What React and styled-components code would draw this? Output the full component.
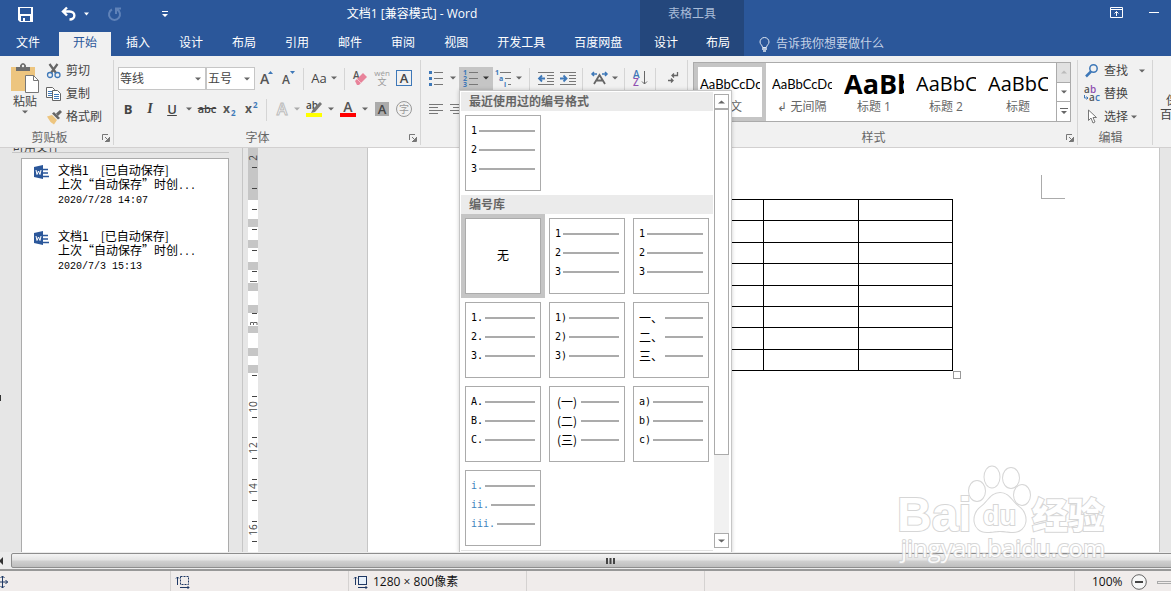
import React from "react";
import styled, { createGlobalStyle, css } from "styled-components";

const Global = createGlobalStyle`
  *, *::before, *::after { box-sizing: border-box; }
  body {
    margin: 0;
    font-family: "Open Sans", "Noto Sans CJK SC", sans-serif;
    font-size: 12px;
    line-height: 16px;
    color: #444;
  }
  button, select {
    font: inherit;
    color: inherit;
    background: none;
    border: 0;
    padding: 0;
    margin: 0;
    border-radius: 0;
  }
  svg { display: block; flex: none; overflow: visible; }
`;

const Shell = styled.div`
  position: relative;
  display: flex;
  flex-direction: column;
  height: 100vh;
  overflow: hidden;
  background: #e6e6e6;
`;

/* ---------- title bar and tabs ---------- */

const Header = styled.header`
  display: flex;
  flex: none;
  background: #2b579a;
  color: #fff;
`;
const HeaderMain = styled.div`
  flex: none;
  width: 640px;
`;
const HeaderContext = styled.div`
  flex: none;
  width: 104px;
  background: #24477c;
`;
const HeaderRest = styled.div`
  flex: 1;
  min-width: 0;
`;
const TitleRow = styled.div`
  display: flex;
  align-items: center;
  height: 28px;
  justify-content: ${(p) => p.$justify || "flex-start"};
  padding: ${(p) => p.$pad || "0"};
  color: ${(p) => p.$color || "#fff"};
`;
const QuickBar = styled.div`
  display: flex;
  align-items: center;
  flex: none;
`;
const QuickButton = styled.button`
  display: flex;
  flex: none;
  align-items: center;
  justify-content: center;
  gap: 8px;
  height: 28px;
  width: ${(p) => p.$w}px;
`;
const Title = styled.h1`
  flex: 1;
  margin: 0;
  padding-right: 16px;
  font-size: 12px;
  font-weight: 400;
  text-align: center;
`;
const TabRow = styled.nav`
  display: flex;
  align-items: stretch;
  height: 28px;
  gap: ${(p) => p.$gap || 0}px;
  padding-top: 4px;
`;
const Tab = styled.button`
  padding: 0 14px 2px;
  white-space: nowrap;
  ${(p) =>
    p.$file &&
    css`
      padding: 0 16px 2px;
      margin-right: 2px;
    `}
  ${(p) =>
    p.$active &&
    css`
      background: #f1f1f1;
      color: #2b579a;
    `}
`;
const TellMe = styled.button`
  display: flex;
  align-items: center;
  gap: 6px;
  margin-left: 15px;
  color: #c5d2e6;
`;

/* ---------- ribbon ---------- */

const Ribbon = styled.div`
  display: flex;
  flex: none;
  height: 92px;
  padding: 4px 0 2px;
  background: #f1f1f1;
  border-bottom: 1px solid #d2d0d0;
`;
const Group = styled.section`
  display: flex;
  flex: none;
  flex-direction: column;
  justify-content: space-between;
  width: ${(p) => p.$w}px;
  border-right: 1px solid #d5d5d5;
  padding-left: ${(p) => p.$pl || 0}px;
`;
const GroupFoot = styled.div`
  display: flex;
  align-items: center;
  height: 14px;
  padding-right: 3px;
  color: #666;
`;
const GroupName = styled.span`
  flex: 1;
  padding-right: 12px;
  text-align: center;
`;
const ToolRows = styled.div`
  display: flex;
  flex-direction: column;
  gap: 8px;
  padding-top: 7px;
`;
const ToolRow = styled.div`
  display: flex;
  align-items: center;
  height: 23px;
`;
const Tool = styled.button`
  display: flex;
  flex: none;
  align-items: center;
  justify-content: center;
  gap: ${(p) => p.$gap || 0}px;
  width: ${(p) => p.$w}px;
  height: 23px;
  padding-bottom: 1px;
  font-size: 13px;
  line-height: 16px;
  background: ${(p) => (p.$on ? "#c5c5c5" : "transparent")};
`;
const ItalicTool = styled(Tool)`
  font-family: "Liberation Serif", serif;
  font-size: 14px;
  font-style: italic;
  font-weight: 700;
`;
const UnderTool = styled(Tool)`
  font-weight: 600;
  text-decoration: underline;
`;
const StrikeTool = styled(Tool)`
  font-size: 11px;
  font-weight: 600;
  text-decoration: line-through;
`;
const Split = styled.span`
  flex: none;
  width: 1px;
  height: 22px;
  margin: 0 ${(p) => p.$m || 4}px;
  background: #d5d5d5;
`;
const Combo = styled.label`
  display: flex;
  align-items: center;
  flex: none;
  width: ${(p) => p.$w}px;
  height: 23px;
  padding-right: 4px;
  background: #fff;
  border: 1px solid #c6c6c6;
  select {
    appearance: none;
    flex: 1;
    min-width: 0;
    padding-left: 1px;
    height: 21px;
    outline: none;
  }
`;
const ClipRow = styled.div`
  display: flex;
  gap: 5px;
`;
const PasteButton = styled.button`
  display: flex;
  flex-direction: column;
  align-items: center;
  width: 32px;
  padding-top: 3px;
`;
const SmallList = styled.div`
  display: flex;
  flex-direction: column;
`;
const SmallButton = styled.button`
  display: flex;
  align-items: center;
  gap: 3px;
  height: 23px;
  padding-bottom: 2px;
  white-space: nowrap;
  > svg:first-child { width: 16px; margin-right: 1px; }
  > svg + span + svg { margin-left: ${(p) => p.$far || 0}px; }
`;
const Gallery = styled.div`
  display: flex;
  width: 378px;
  height: 60px;
  margin-top: 2px;
  background: #fff;
  border: 1px solid #ababab;
`;
const StyleItem = styled.button`
  display: flex;
  flex-direction: column;
  align-items: center;
  justify-content: flex-end;
  width: 72px;
  padding: 0 2px 2px;
  color: #666;
  border: 4px solid ${(p) => (p.$on ? "#c5c5c5" : "transparent")};
`;
const Sample = styled.span`
  display: flex;
  align-items: center;
  align-self: stretch;
  height: 30px;
  overflow: hidden;
  white-space: nowrap;
  color: #000;
  font-family: ${(p) => (p.$body ? "Lato" : '"Open Sans"')}, sans-serif;
  font-size: ${(p) => p.$size}px;
  font-weight: ${(p) => (p.$bold ? 700 : 400)};
`;
const GalleryBar = styled.div`
  display: flex;
  flex-direction: column;
  width: 14px;
  margin-left: auto;
  border-left: 1px solid #ababab;
`;
const GalleryStep = styled.button`
  display: flex;
  flex: 1;
  align-items: center;
  justify-content: center;
  background: ${(p) => (p.$off ? "#e1e1e1" : "#fff")};
  & + & { border-top: 1px solid #ababab; }
`;
const CloudButton = styled.button`
  display: flex;
  flex: none;
  flex-direction: column;
  align-items: center;
  gap: 4px;
  width: 62px;
  line-height: 14px;
`;

/* ---------- numbering menu ---------- */

const MenuAnchor = styled.div`
  position: relative;
`;
const Menu = styled.div`
  position: absolute;
  z-index: 5;
  top: 100%;
  left: 0;
  display: flex;
  width: 273px;
  padding: 1px;
  background: #fff;
  border: 1px solid #c6c6c6;
  box-shadow: 0 0 4px rgba(0, 0, 0, 0.2);
`;
const MenuBody = styled.div`
  width: 252px;
  border-bottom: 1px solid #e1e1e1;
`;
const MenuHead = styled.h2`
  margin: 0;
  padding-left: 8px;
  height: 19px;
  font-size: 12px;
  line-height: 19px;
  font-weight: 700;
  color: #666;
  background: #ebebeb;
`;
const Cards = styled.div`
  display: grid;
  grid-template-columns: repeat(3, 84px);
`;
const CardCell = styled.div`
  padding: 4px;
  background: ${(p) => (p.$on ? "#c5c5c5" : "transparent")};
`;
const Card = styled.button`
  display: flex;
  flex-direction: column;
  justify-content: ${(p) => (p.$center ? "center" : "flex-start")};
  align-items: stretch;
  width: 76px;
  height: 76px;
  padding: 5px;
  color: #000;
  background: #fff;
  border: 1px solid #ababab;
`;
const CardLine = styled.span`
  display: flex;
  align-items: center;
  gap: 2px;
  height: 19px;
  &::after {
    content: "";
    flex: 1;
    height: 2px;
    background: #ababab;
  }
`;
const Mark = styled.span`
  width: ${(p) => p.$n * 6}px;
  white-space: nowrap;
  text-align: ${(p) => (p.$cjk ? "center" : "left")};
  font-family: ${(p) => (p.$cjk ? '"Noto Sans CJK SC"' : '"DejaVu Sans Mono"')}, monospace;
  font-size: ${(p) => (p.$cjk ? 12 : 10)}px;
  line-height: 14px;
  color: ${(p) => (p.$tint ? "#3f84bd" : "#000")};
`;
const MenuBar = styled.div`
  display: flex;
  flex-direction: column;
  width: 15px;
  margin: 2px 0 3px 1px;
  background: #f1f1f1;
`;
const BarButton = styled.button`
  display: flex;
  align-items: center;
  justify-content: center;
  height: 15px;
  background: #fff;
  border: 1px solid #ababab;
`;
const DownButton = styled(BarButton)`
  margin-top: auto;
`;
const BarThumb = styled.div`
  height: 346px;
  background: #fff;
  border: 1px solid #ababab;
`;

/* ---------- workspace ---------- */

const Workspace = styled.div`
  display: flex;
  flex: 1;
  min-height: 0;
  overflow: hidden;
`;
const Handle = styled.div`
  display: flex;
  align-items: center;
  width: 12px;
  padding-top: 96px;
`;
const Pane = styled.aside`
  display: flex;
  flex-direction: column;
  width: 217px;
  overflow: hidden;
`;
const PaneTitle = styled.div`
  display: flex;
  align-items: flex-end;
  height: 5px;
  overflow: hidden;
  line-height: 8px;
  border-bottom: 1px solid #c6c6c6;
`;
const FileList = styled.ul`
  flex: 1;
  margin: 5px 0 0 9px;
  padding: 4px 12px;
  list-style: none;
  background: #fff;
  border: 1px solid #ababab;
  border-bottom: 0;
`;
const FileItem = styled.li`
  display: flex;
  gap: 9px;
  height: 66px;
  color: #000;
  font-family: "Noto Sans CJK SC", sans-serif;
  line-height: 14px;
  white-space: nowrap;
  > svg { margin-top: 2px; }
`;
const FileName = styled.div`
  display: flex;
  gap: 12px;
`;
const FileDate = styled.div`
  font-family: "Liberation Mono", monospace;
  font-size: 10px;
`;
const Dots = styled.span`
  font-family: "Liberation Mono", monospace;
  font-size: 10px;
`;
const RulerStrip = styled.div`
  flex: none;
  margin-left: 13px;
  padding-left: 5px;
  border-left: 1px solid #c6c6c6;
  overflow: hidden;
`;
const Page = styled.main`
  flex: 1;
  display: flex;
  flex-direction: column;
  align-items: center;
  margin: 0 11px 0 109px;
  background: #fff;
  border: solid #c6c6c6;
  border-width: 0 1px;
`;
const CropRow = styled.div`
  display: flex;
  justify-content: flex-end;
  align-self: stretch;
  padding: 27px 94px 0 0;
`;
const Crop = styled.span`
  width: 24px;
  height: 24px;
  border: solid #ababab;
  border-width: 0 0 1px 1px;
`;
const TableWrap = styled.div`
  position: relative;
`;
const Table = styled.table`
  width: 379px;
  height: 172px;
  table-layout: fixed;
  border-collapse: collapse;
  td { padding: 0; border: 1px solid #000; }
`;
const Resize = styled.span`
  position: absolute;
  top: 100%;
  left: 100%;
  width: 8px;
  height: 8px;
  background: #fff;
  border: 1px solid #999;
`;

/* ---------- bottom ---------- */

const ScrollBar = styled.div`
  position: relative;
  z-index: 6;
  display: flex;
  flex: none;
  height: 19px;
  padding: 1px 0;
  background: #ececec;
  border-bottom: 2px solid #989898;
`;
const ScrollArrow = styled.button`
  display: flex;
  align-items: center;
  width: 11px;
`;
const ScrollThumb = styled.div`
  display: flex;
  flex: 1;
  align-items: center;
  justify-content: center;
  height: 15px;
  margin-right: -38px;
  border: 1px solid #8d8d8d;
  border-radius: 2px;
  background: linear-gradient(#f4f4f4, #e4e4e4 45%, #cfcfcf 55%, #bebebe);
`;
const Status = styled.footer`
  display: flex;
  flex: none;
  height: 20px;
  background: #f0eceb;
  color: #111;
`;
const StatusCell = styled.div`
  display: flex;
  align-items: center;
  gap: 5px;
  flex: ${(p) => (p.$w ? "none" : 1)};
  width: ${(p) => (p.$w ? p.$w + "px" : "auto")};
  padding: 2px 0 0 ${(p) => p.$pl || 0}px;
  border-right: 1px solid #d5d2d1;
  white-space: nowrap;
`;
const ZoomCell = styled.div`
  display: flex;
  align-items: center;
  gap: 8px;
  flex: none;
  width: 96px;
  padding: 2px 0 0 17px;
`;
const ZoomTrack = styled.span`
  flex: 1;
  height: 3px;
  margin-left: 2px;
  border: 1px solid #aaa;
  border-right: 0;
`;
const Watermark = styled.div`
  position: absolute;
  z-index: 7;
  right: 60px;
  bottom: 22px;
  opacity: 0.9;
  pointer-events: none;
`;

/* ---------- icons ---------- */

const Caret = ({ color = "#666", w = 6, up = false }) => (
  <svg width={w} height="4" viewBox="0 0 6 4" preserveAspectRatio="none">
    <path d={up ? "M0 3.5h6L3 .5z" : "M0 .5h6L3 3.5z"} fill={color} />
  </svg>
);
const Launcher = () => (
  <svg width="8" height="8" viewBox="0 0 8 8" fill="none" stroke="#777">
    <path d="M.5 6V.5H6M3 3l3 3M7.500 3v4.500H3" />
    <path d="M7 4v3H4z" fill="#777" />
  </svg>
);
const SaveIcon = () => (
  <svg width="15" height="15" viewBox="0 0 15 15" fill="#fff">
    <path d="M0 0h15v15H2l-2-2zM2 1v6h11V1zM3 9v5h2v-3h2v3h5V9z" fillRule="evenodd" />
  </svg>
);
const UndoIcon = () => (
  <svg width="15" height="14" viewBox="0 0 15 14" fill="none" stroke="#fff" strokeWidth="2.400">
    <path d="M6 .5 2 4.500l4 4M2 4.500h6.500c6.500 0 6.500 8 0 8" />
  </svg>
);
const RedoIcon = () => (
  <svg width="14" height="14" viewBox="0 0 14 14" fill="none" stroke="#5f82b8" strokeWidth="2">
    <path d="M4 2.500a5.500 5.500 0 1 0 5 0M8 7V1.500h5" />
  </svg>
);
const CustomIcon = () => (
  <svg width="6" height="6" viewBox="0 0 6 6" fill="#fff">
    <path d="M0 0h6v1H0zM0 3h6L3 6z" />
  </svg>
);
const DisplayIcon = () => (
  <svg width="13" height="11" viewBox="0 0 13 11" fill="none" stroke="#fff">
    <path d="M.5.5h12v10H.5zM.5 2.500h12M6.500 9V4.500M4.500 6.500l2-2 2 2" />
  </svg>
);
const BulbIcon = () => (
  <svg width="11" height="15" viewBox="0 0 11 15" fill="none" stroke="#dfe7f2">
    <path d="M3.500 10.500C3.500 8 1 7.500 1 5a4.500 4.500 0 0 1 9 0c0 2.500-2.500 3-2.500 5.500z" />
    <path d="M3 12h5M4 14h3" strokeWidth="1.500" />
  </svg>
);
const PasteIcon = () => (
  <svg width="28" height="31" viewBox="0 0 28 31">
    <path d="M0 4h24v24H0z" fill="#edc57f" />
    <path d="M5 4h4V2.500Q10 0 12 0t3 2.500V4h4v4H5z" fill="#6d6d6d" />
    <circle cx="12" cy="3" r="1.200" fill="#f1f1f1" />
    <path d="M14.500 12.500h8l5 5v12h-13z" fill="#fff" stroke="#777" />
    <path d="M22.500 12.500v5h5" fill="none" stroke="#777" />
  </svg>
);
const CutIcon = () => (
  <svg width="16" height="16" viewBox="0 0 16 16" fill="none">
    <path d="M3.500 1 10 10M11.500 1 5 10" stroke="#666" strokeWidth="2.200" />
    <circle cx="4" cy="12" r="2.500" stroke="#3e78b8" strokeWidth="1.300" />
    <circle cx="11.500" cy="12" r="2.500" stroke="#3e78b8" strokeWidth="1.300" />
  </svg>
);
const CopyIcon = () => (
  <svg width="16" height="16" viewBox="0 0 16 16" fill="#fff" stroke="#666">
    <path d="M.5 1.500h6l2 2v8h-8z" />
    <path d="M2 5.500h4M2 7.500h4M2 9.500h4" stroke="#3e78b8" />
    <path d="M6.500 4.500h5l3 3v7h-8z" />
    <path d="M8 8.500h5M8 10.500h5M8 12.500h5" stroke="#3e78b8" />
  </svg>
);
const BrushIcon = () => (
  <svg width="16" height="16" viewBox="0 0 16 16">
    <path d="M1 7.500 6 6l5 5-3 4.500L4.500 13z" fill="#edc57f" />
    <path d="m6 4.500 2-1.500 6 6-2 1.500zM10 4.500 14 1l2 2-4 4z" fill="#666" />
  </svg>
);
const GrowIcon = ({ down = false }) => (
  <svg width="14" height="16" viewBox="0 0 14 16" fontFamily="Open Sans" fontWeight="600" fill="#555">
    <text x="0" y="14" fontSize={down ? 12 : 14}>A</text>
    <path d={down ? "M8 1h5l-2.500 3z" : "M8 4h5L10.500 1z"} fill="#3e78b8" />
  </svg>
);
const EraserIcon = () => (
  <svg width="16" height="16" viewBox="0 0 16 16">
    <text x="1" y="9" fontSize="10" fontWeight="600" fontFamily="Open Sans" fill="#555">A</text>
    <path d="m3 11 8-8 4 4-8 8H5z" fill="#e8839a" />
    <path d="m5 9 4 4" stroke="#f5bfca" />
  </svg>
);
const PinyinIcon = () => (
  <svg width="17" height="18" viewBox="0 0 17 18" fill="#999" textAnchor="middle" fontFamily="Open Sans, Noto Sans CJK SC">
    <text x="8" y="7" fontSize="8">wén</text>
    <text x="8" y="16" fontSize="9">文</text>
  </svg>
);
const BoxedA = () => (
  <svg width="16" height="16" viewBox="0 0 16 16">
    <rect x=".5" y=".5" width="15" height="15" fill="none" stroke="#3e78b8" />
    <text x="8" y="13" fontSize="13" fontWeight="600" textAnchor="middle" fontFamily="Open Sans" fill="#444">A</text>
  </svg>
);
const ShadedA = () => (
  <svg width="14" height="14" viewBox="0 0 14 14">
    <path d="M0 0h14v14H0z" fill="#ababab" />
    <text x="7" y="12" fontSize="13" fontWeight="600" textAnchor="middle" fontFamily="Open Sans" fill="#444">A</text>
  </svg>
);
const CircledChar = () => (
  <svg width="16" height="16" viewBox="0 0 16 16">
    <circle cx="8" cy="8" r="7.500" fill="none" stroke="#999" />
    <text x="8" y="12" fontSize="10" textAnchor="middle" fontFamily="Noto Sans CJK SC" fill="#999">字</text>
  </svg>
);
const OutlineA = () => (
  <svg width="14" height="16" viewBox="0 0 14 16">
    <text x="7" y="14" fontSize="16" fontWeight="600" textAnchor="middle" fontFamily="Open Sans" fill="#fff" stroke="#bbb">A</text>
  </svg>
);
const HighlightIcon = () => (
  <svg width="16" height="16" viewBox="0 0 16 16">
    <text x="0" y="8" fontSize="10" fontWeight="600" fontFamily="Open Sans" fill="#444">ab</text>
    <path d="m14 1 2 2-7 8-4 1 2-4z" fill="#777" />
    <path d="M0 12h16v4H0z" fill="#ff0" />
  </svg>
);
const FontColorIcon = () => (
  <svg width="16" height="16" viewBox="0 0 16 16">
    <text x="8" y="11" fontSize="14" fontWeight="600" textAnchor="middle" fontFamily="Open Sans" fill="#555">A</text>
    <path d="M0 12h16v4H0z" fill="red" />
  </svg>
);
const ScriptIcon = ({ sup = false }) => (
  <svg width="13" height="16" viewBox="0 0 13 16" fontFamily="Open Sans" fontWeight="700">
    <text x="0" y="12" fontSize="12" fill="#555">x</text>
    <text x="8" y={sup ? 7 : 15} fontSize="8" fill="#3e78b8">2</text>
  </svg>
);
const BulletsIcon = () => (
  <svg width="14" height="16" viewBox="0 0 14 16">
    <path d="M0 1h3v3H0zM0 7h3v3H0zM0 13h3v3H0z" fill="#3e78b8" />
    <path d="M5 2.500h9M5 8.500h9M5 14.500h9" stroke="#777" />
  </svg>
);
const NumbersIcon = () => (
  <svg width="15" height="17" viewBox="0 0 15 17">
    <g fontSize="7" fontWeight="700" fontFamily="Open Sans" fill="#3e78b8">
      <text x="0" y="5">1</text>
      <text x="0" y="11">2</text>
      <text x="0" y="17">3</text>
    </g>
    <path d="M6 2.500h9M6 8.500h9M6 14.500h9" stroke="#777" />
  </svg>
);
const LevelsIcon = () => (
  <svg width="16" height="17" viewBox="0 0 16 17">
    <g fontSize="7" fontWeight="700" fontFamily="Open Sans" fill="#3e78b8">
      <text x="0" y="5">1</text>
      <text x="4" y="11">a</text>
      <text x="9" y="17">i</text>
    </g>
    <path d="M5 2.500h11M10 8.500h6M13 14.500h3" stroke="#777" />
  </svg>
);
const IndentIcon = ({ out = false }) => (
  <svg width="16" height="13" viewBox="0 0 16 13" fill="none">
    <path d="M0 .5h16M9 3.500h7M9 6.500h7M9 9.500h7M0 12.500h16" stroke="#777" />
    <path d={out ? "M7 6.500H1M4 3.500l-3 3 3 3" : "M0 6.500h6M3.500 3.500l3 3-3 3"} stroke="#3e78b8" strokeWidth="1.800" />
  </svg>
);
const AsianIcon = () => (
  <svg width="17" height="14" viewBox="0 0 17 14" fill="none">
    <path d="m3 13 5.500-9 5.500 9M5 9.500h7" stroke="#666" strokeWidth="1.800" />
    <path d="M6 3H1m2-2L1 3l2 2M11 3h5m-2-2 2 2-2 2" stroke="#3e78b8" strokeWidth="1.500" />
  </svg>
);
const SortIcon = () => (
  <svg width="15" height="17" viewBox="0 0 15 17" fontFamily="Open Sans" fontWeight="600">
    <text x="0" y="8" fontSize="10" fill="#3e78b8">A</text>
    <text x="0" y="16" fontSize="10" fill="#8f4fb0">Z</text>
    <path d="M11.500 1v13M9 11.500l2.500 2.500 2.500-2.500" fill="none" stroke="#666" />
  </svg>
);
const MarksIcon = () => (
  <svg width="11" height="12" viewBox="0 0 11 12" fill="none" stroke="#666" strokeWidth="1.300">
    <path d="M9.500 0v3.500H4M6 1.500l-2 2 2 2M0 8.500h5M3 6.500l2 2-2 2" />
  </svg>
);
const AlignIcon = ({ center = false }) => (
  <svg width="14" height="11" viewBox="0 0 14 11" stroke="#777">
    <path d={center ? "M0 .5h14M3 3.500h8M0 6.500h14M3 9.500h8" : "M0 .5h14M0 3.500h9M0 6.500h14M0 9.500h9"} />
  </svg>
);
const FindIcon = () => (
  <svg width="13" height="13" viewBox="0 0 13 13" fill="none" stroke="#3e78b8">
    <circle cx="8" cy="4.500" r="3.700" strokeWidth="1.500" />
    <path d="m5.500 7.500-5 5" strokeWidth="2.500" />
  </svg>
);
const ReplaceIcon = () => (
  <svg width="16" height="16" viewBox="0 0 16 16" fontFamily="Open Sans" fontWeight="600" fontSize="10">
    <text x="0" y="7" fill="#555">a</text>
    <text x="6" y="7" fill="#8f4fb0">b</text>
    <text x="5" y="15" fill="#555">a</text>
    <text x="11" y="15" fill="#3e78b8">c</text>
    <path d="M.5 9v3H4M2.500 10.500 4 12l-1.500 1.500" fill="none" stroke="#3e78b8" />
  </svg>
);
const PointerIcon = () => (
  <svg width="12" height="15" viewBox="0 0 12 15" fill="#fff" stroke="#777">
    <path d="M2.500 1v10.500L5 9l2 5 2-1-2-4.500h3.500z" />
  </svg>
);
const CloudIcon = () => (
  <svg width="28" height="30" viewBox="0 0 28 30">
    <path d="M6 27a6 6 0 0 1 0-11 8 8 0 0 1 15-1 6 6 0 0 1 1 12z" fill="#4bb0c4" />
  </svg>
);
const WordIcon = () => (
  <svg width="15" height="15" viewBox="0 0 15 15">
    <path d="M7 3h6v10H7z" fill="#fff" />
    <path d="M8 4.500h6M8 8h6M8 11.500h7" stroke="#2b579a" strokeWidth="1.500" />
    <path d="m0 2 9-2v14l-9-2z" fill="#2b579a" />
    <path d="m2 5 1 4.500L4.500 6 6 9.500 7 5" fill="none" stroke="#fff" />
  </svg>
);
const MoveIcon = () => (
  <svg width="8" height="12" viewBox="0 0 8 12" fill="none" stroke="#1f3864">
    <path d="M0 6h8M2.500 0v12M5.500 4l2 2-2 2M.5 2l2-2 2 2M.5 10l2 2 2-2" />
  </svg>
);
const SizeIcon = ({ dashed = false }) => (
  <svg width="14" height="13" viewBox="0 0 14 13" fill="none" stroke="#1f3864">
    <path d="M1.500 1v8M0 2.500 1.500 1 3 2.500M4 11.500h9M11.500 10l1.500 1.500-1.500 1.500" />
    <rect x="4.500" y=".5" width="8" height="8" strokeDasharray={dashed ? "2 1" : "none"} fill={dashed ? "none" : "#e7f0fa"} />
  </svg>
);
const MinusIcon = () => (
  <svg width="16" height="16" viewBox="0 0 16 16">
    <circle cx="8" cy="8" r="7.300" fill="#f7f7f7" stroke="#666" />
    <path d="M4 8h8" stroke="#444" strokeWidth="2" />
  </svg>
);

const bands = [[52, 71], [79, 92], [100, 114], [122, 135], [143, 157], [165, 178], [185, 200], [208, 217], [225, 900]];
const ticks = [19, 40, 61, 81, 102, 123, 165, 227, 248, 269, 289, 310, 331, 352, 373, 393];
const marks = [["2", 10], ["10", 259], ["12", 300], ["14", 341], ["16", 382]];
const Ruler = () => (
  <svg width="10" height="900" viewBox="0 0 10 900">
    <path d="M0 0h10v225H0z" fill="#c6c6c6" />
    {bands.map(([a, b]) => <rect key={a} y={a} width="10" height={b - a} fill="#fff" />)}
    {ticks.map((y) => <path key={y} d={`M4 ${y}.5h5`} stroke="#444" />)}
    <path d="M2 133.500h7M2.500 177v-2.500h3v2.500M6 174.500h3v2.500" stroke="#666" fill="none" />
    {marks.map(([t, y]) => (
      <text key={t} transform={`translate(9 ${y}) rotate(-90)`} textAnchor="middle" fontSize="10" fontFamily="Open Sans" fill="#444">{t}</text>
    ))}
  </svg>
);

const Logo = () => (
  <svg width="212" height="106" viewBox="0 0 212 106" fill="#fff" stroke="#d2d2d2" strokeWidth="2" paintOrder="stroke">
    <ellipse cx="78" cy="28" rx="8" ry="10" />
    <ellipse cx="93" cy="14" rx="7.500" ry="10.500" />
    <ellipse cx="112" cy="15" rx="8" ry="10" />
    <ellipse cx="123" cy="32" rx="8" ry="10" />
    <path d="M101 30c-9 0-12 9-19 14-10 7-9 25 6 25 6 0 8-1 13-1s7 1 13 1c15 0 16-18 6-25-7-5-10-14-19-14z" />
    <g fontFamily="Liberation Sans" fontWeight="700">
      <text x="-2" y="68" fontSize="48">Bai</text>
      <text x="84" y="62" fontSize="27">du</text>
    </g>
    <text x="133" y="66" fontSize="36" fontWeight="900" fontFamily="Noto Sans CJK SC">经验</text>
    <text x="2" y="94" fontSize="24" fontFamily="Open Sans">jingyan.baidu.com</text>
  </svg>
);

/* ---------- content ---------- */

const tabs = ["插入", "设计", "布局", "引用", "邮件", "审阅", "视图", "开发工具", "百度网盘"];
const styleItems = [
  { name: "正文", sample: "AaBbCcDc", size: 13, body: true, on: true },
  { name: "↲ 无间隔", sample: "AaBbCcDc", size: 13, body: true },
  { name: "标题 1", sample: "AaBb", size: 27, bold: true },
  { name: "标题 2", sample: "AaBbC", size: 20 },
  { name: "标题", sample: "AaBbC", size: 20 },
];
const digits = { rows: ["1", "2", "3"], n: 1 };
const library = [
  digits,
  digits,
  { rows: ["1.", "2.", "3."], n: 2 },
  { rows: ["1)", "2)", "3)"], n: 2 },
  { rows: ["一、", "二、", "三、"], n: 4, cjk: true },
  { rows: ["A.", "B.", "C."], n: 2 },
  { rows: ["(一)", "(二)", "(三)"], n: 4, cjk: true },
  { rows: ["a)", "b)", "c)"], n: 2 },
  { rows: ["i.", "ii.", "iii."], tint: true },
];
const files = ["2020/7/28 14:07", "2020/7/3 15:13"];

const NumberCard = ({ rows, n, cjk, tint }) => (
  <CardCell>
    <Card>
      {rows.map((r) => (
        <CardLine key={r}>
          <Mark $n={n || r.length} $cjk={cjk} $tint={tint}>{r}</Mark>
        </CardLine>
      ))}
    </Card>
  </CardCell>
);

const NumberingMenu = () => (
  <Menu>
    <MenuBody>
      <MenuHead>最近使用过的编号格式</MenuHead>
      <Cards><NumberCard {...digits} /></Cards>
      <MenuHead>编号库</MenuHead>
      <Cards>
        <CardCell $on><Card $center>无</Card></CardCell>
        {library.map((item, i) => <NumberCard key={i} {...item} />)}
      </Cards>
    </MenuBody>
    <MenuBar>
      <BarButton aria-label="向上"><Caret up w={7} /></BarButton>
      <BarThumb />
      <DownButton aria-label="向下"><Caret w={7} /></DownButton>
    </MenuBar>
  </Menu>
);

const Foot = ({ name, plain }) => (
  <GroupFoot>
    <GroupName>{name}</GroupName>
    {!plain && <Launcher />}
  </GroupFoot>
);

export default function App() {
  return (
    <Shell>
      <Global />
      <Header>
        <HeaderMain>
          <TitleRow>
            <QuickBar>
              <QuickButton $w={50} aria-label="保存"><SaveIcon /></QuickButton>
              <QuickButton $w={50} aria-label="撤消"><UndoIcon /><Caret color="#fff" w={5} /></QuickButton>
              <QuickButton $w={30} aria-label="重复"><RedoIcon /></QuickButton>
              <QuickButton $w={70} aria-label="自定义快速访问工具栏"><CustomIcon /></QuickButton>
            </QuickBar>
            <Title>文档1 [兼容模式] - Word</Title>
          </TitleRow>
          <TabRow $gap={1}>
            <Tab $file>文件</Tab>
            <Tab $active>开始</Tab>
            {tabs.map((t) => <Tab key={t}>{t}</Tab>)}
          </TabRow>
        </HeaderMain>
        <HeaderContext>
          <TitleRow $justify="center" $color="#a9bcd8">表格工具</TitleRow>
          <TabRow>
            <Tab>设计</Tab>
            <Tab>布局</Tab>
          </TabRow>
        </HeaderContext>
        <HeaderRest>
          <TitleRow $justify="flex-end" $pad="0 3px 4px 0">
            <QuickButton $w={48} aria-label="功能区显示选项"><DisplayIcon /></QuickButton>
            <QuickButton $w={28} aria-label="最小化">
              <svg width="10" height="1"><path d="M0 .5h10" stroke="#fff" /></svg>
            </QuickButton>
          </TitleRow>
          <TabRow>
            <TellMe><BulbIcon />告诉我你想要做什么</TellMe>
          </TabRow>
        </HeaderRest>
      </Header>

      <Ribbon>
        <Group $w={114} $pl={9}>
          <ClipRow>
            <PasteButton><PasteIcon />粘贴<Caret /></PasteButton>
            <SmallList>
              <SmallButton><CutIcon /><span>剪切</span></SmallButton>
              <SmallButton><CopyIcon /><span>复制</span></SmallButton>
              <SmallButton><BrushIcon /><span>格式刷</span></SmallButton>
            </SmallList>
          </ClipRow>
          <Foot name="剪贴板" />
        </Group>

        <Group $w={307} $pl={4}>
          <ToolRows>
            <ToolRow>
              <Combo $w={88}>
                <select aria-label="字体"><option>等线</option></select>
                <Caret />
              </Combo>
              <Combo $w={49}>
                <select aria-label="字号"><option>五号</option></select>
                <Caret />
              </Combo>
              <Tool $w={24} aria-label="增大字号"><GrowIcon /></Tool>
              <Tool $w={20} aria-label="减小字号"><GrowIcon down /></Tool>
              <Split />
              <Tool $w={32} $gap={4}>Aa<Caret /></Tool>
              <Split />
              <Tool $w={22} aria-label="清除格式"><EraserIcon /></Tool>
              <Tool $w={22} aria-label="拼音指南"><PinyinIcon /></Tool>
              <Tool $w={22} aria-label="字符边框"><BoxedA /></Tool>
            </ToolRow>
            <ToolRow>
              <Tool $w={20}><b>B</b></Tool>
              <ItalicTool $w={24}>I</ItalicTool>
              <UnderTool $w={20}>U</UnderTool>
              <Tool $w={14} aria-label="下划线样式"><Caret /></Tool>
              <StrikeTool $w={22}>abc</StrikeTool>
              <Tool $w={22} aria-label="下标"><ScriptIcon /></Tool>
              <Tool $w={22} aria-label="上标"><ScriptIcon sup /></Tool>
              <Split />
              <Tool $w={22} aria-label="文本效果"><OutlineA /></Tool>
              <Tool $w={8} aria-label="文本效果选项"><Caret color="#aaa" /></Tool>
              <Tool $w={26} aria-label="突出显示"><HighlightIcon /></Tool>
              <Tool $w={8} aria-label="突出显示颜色"><Caret /></Tool>
              <Tool $w={26} aria-label="字体颜色"><FontColorIcon /></Tool>
              <Tool $w={8} aria-label="字体颜色选项"><Caret /></Tool>
              <Tool $w={26} aria-label="字符底纹"><ShadedA /></Tool>
              <Tool $w={18} aria-label="带圈字符"><CircledChar /></Tool>
            </ToolRow>
          </ToolRows>
          <Foot name="字体" />
        </Group>

        <Group $w={267} $pl={4}>
          <ToolRows>
            <ToolRow>
              <Tool $w={22} aria-label="项目符号"><BulletsIcon /></Tool>
              <Tool $w={12} aria-label="项目符号库"><Caret /></Tool>
              <MenuAnchor>
                <Tool $w={34} $gap={5} $on aria-label="编号"><NumbersIcon /><Caret color="#333" /></Tool>
                <NumberingMenu />
              </MenuAnchor>
              <Tool $w={20} aria-label="多级列表"><LevelsIcon /></Tool>
              <Tool $w={12} aria-label="多级列表库"><Caret /></Tool>
              <Split />
              <Tool $w={24} aria-label="减少缩进量"><IndentIcon out /></Tool>
              <Tool $w={20} aria-label="增加缩进量"><IndentIcon /></Tool>
              <Split />
              <Tool $w={24} aria-label="中文版式"><AsianIcon /></Tool>
              <Tool $w={8} aria-label="中文版式选项"><Caret /></Tool>
              <Split $m={5} />
              <Tool $w={20} aria-label="排序"><SortIcon /></Tool>
              <Split $m={5} />
              <Tool $w={24} aria-label="显示编辑标记"><MarksIcon /></Tool>
            </ToolRow>
            <ToolRow>
              <Tool $w={22} aria-label="左对齐"><AlignIcon /></Tool>
              <Tool $w={20} aria-label="居中"><AlignIcon center /></Tool>
            </ToolRow>
          </ToolRows>
        </Group>

        <Group $w={390} $pl={5}>
          <Gallery>
            {styleItems.map((s) => (
              <StyleItem key={s.name} $on={s.on}>
                <Sample $size={s.size} $bold={s.bold} $body={s.body}>{s.sample}</Sample>
                {s.name}
              </StyleItem>
            ))}
            <GalleryBar>
              <GalleryStep $off aria-label="上一行"><Caret up color="#bbb" /></GalleryStep>
              <GalleryStep aria-label="下一行"><Caret /></GalleryStep>
              <GalleryStep aria-label="其他">
                <svg width="8" height="7" viewBox="0 0 8 7" fill="#666"><path d="M0 0h8v1H0zM1 3h6L4 6z" /></svg>
              </GalleryStep>
            </GalleryBar>
          </Gallery>
          <Foot name="样式" />
        </Group>

        <Group $w={75} $pl={6}>
          <SmallList>
            <SmallButton $far={8}><FindIcon /><span>查找</span><Caret /></SmallButton>
            <SmallButton><ReplaceIcon /><span>替换</span></SmallButton>
            <SmallButton><PointerIcon /><span>选择</span><Caret /></SmallButton>
          </SmallList>
          <Foot name="编辑" plain />
        </Group>

        <CloudButton>
          <CloudIcon />
          <span>保存到<br />百度网盘</span>
        </CloudButton>
      </Ribbon>

      <Workspace>
        <Handle><svg width="2" height="6"><path d="M0 0h1v6H0z" fill="#333" /></svg></Handle>
        <Pane>
          <PaneTitle>可用文件</PaneTitle>
          <FileList>
            {files.map((date) => (
              <FileItem key={date}>
                <WordIcon />
                <div>
                  <FileName><span>文档1</span><span>[已自动保存]</span></FileName>
                  <div>上次“自动保存”时创<Dots>...</Dots></div>
                  <FileDate>{date}</FileDate>
                </div>
              </FileItem>
            ))}
          </FileList>
        </Pane>
        <RulerStrip><Ruler /></RulerStrip>
        <Page>
          <CropRow><Crop /></CropRow>
          <TableWrap>
            <Table>
              <tbody>
                {Array.from({ length: 8 }, (_, r) => (
                  <tr key={r}><td /><td /><td /><td /></tr>
                ))}
              </tbody>
            </Table>
            <Resize />
          </TableWrap>
        </Page>
      </Workspace>

      <ScrollBar>
        <ScrollArrow aria-label="向左滚动">
          <svg width="3" height="8"><path d="M3 0v8L-1 4z" fill="#333" /></svg>
        </ScrollArrow>
        <ScrollThumb>
          <svg width="9" height="6"><path d="M1 0v6M4.500 0v6M8 0v6" stroke="#444" strokeWidth="2" /></svg>
        </ScrollThumb>
      </ScrollBar>
      <Status>
        <StatusCell $w={171}><MoveIcon /></StatusCell>
        <StatusCell $w={178} $pl={5}><SizeIcon dashed /></StatusCell>
        <StatusCell $w={178} $pl={5}><SizeIcon />1280 × 800像素</StatusCell>
        <StatusCell $w={178} />
        <StatusCell />
        <ZoomCell>100%<MinusIcon /><ZoomTrack /></ZoomCell>
      </Status>
      <Watermark><Logo /></Watermark>
    </Shell>
  );
}
